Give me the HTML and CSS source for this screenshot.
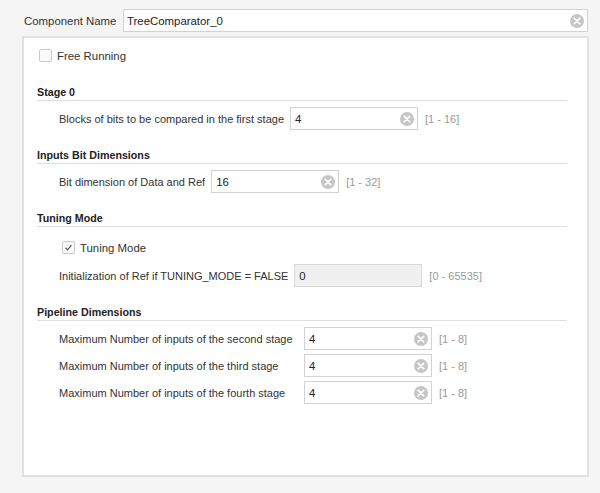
FILE: index.html
```html
<!DOCTYPE html>
<html>
<head>
<meta charset="utf-8">
<link rel="stylesheet" href="styles.css">
</head>
<body>
<div class="name-row">
  <label class="name-label">Component Name</label>
  <div class="field name-field">
    <span class="value">TreeComparator_0</span>
    <svg class="clear" width="14" height="14" viewBox="0 0 14 14"><circle cx="7" cy="7" r="7" fill="#c6c6c6"/><path d="M4.3 4.3 L9.7 9.7 M9.7 4.3 L4.3 9.7" stroke="#fff" stroke-width="1.8" stroke-linecap="round"/></svg>
  </div>
</div>

<div class="panel">
  <div class="check-row top-check">
    <span class="checkbox"></span>
    <span>Free Running</span>
  </div>

  <div class="section">
    <div class="heading">Stage 0</div>
    <div class="row">
      <span class="label">Blocks of bits to be compared in the first stage</span>
      <div class="field"><span class="value">4</span><svg class="clear" width="14" height="14" viewBox="0 0 14 14"><circle cx="7" cy="7" r="7" fill="#c6c6c6"/><path d="M4.3 4.3 L9.7 9.7 M9.7 4.3 L4.3 9.7" stroke="#fff" stroke-width="1.8" stroke-linecap="round"/></svg></div>
      <span class="hint">[1 - 16]</span>
    </div>
  </div>

  <div class="section">
    <div class="heading">Inputs Bit Dimensions</div>
    <div class="row">
      <span class="label">Bit dimension of Data and Ref</span>
      <div class="field"><span class="value">16</span><svg class="clear" width="14" height="14" viewBox="0 0 14 14"><circle cx="7" cy="7" r="7" fill="#c6c6c6"/><path d="M4.3 4.3 L9.7 9.7 M9.7 4.3 L4.3 9.7" stroke="#fff" stroke-width="1.8" stroke-linecap="round"/></svg></div>
      <span class="hint">[1 - 32]</span>
    </div>
  </div>

  <div class="section">
    <div class="heading">Tuning Mode</div>
    <div class="check-row sub-check">
      <span class="checkbox"><svg width="13" height="13" viewBox="0 0 13 13"><path d="M3 6.8 L5.4 9.2 L10 3.6" fill="none" stroke="#5a5a5a" stroke-width="1.4"/></svg></span>
      <span>Tuning Mode</span>
    </div>
    <div class="row row-tight">
      <span class="label">Initialization of Ref if TUNING_MODE = FALSE</span>
      <div class="field disabled"><span class="value">0</span></div>
      <span class="hint">[0 - 65535]</span>
    </div>
  </div>

  <div class="section">
    <div class="heading">Pipeline Dimensions</div>
    <div class="grid">
      <span class="label">Maximum Number of inputs of the second stage</span>
      <div class="field"><span class="value">4</span><svg class="clear" width="14" height="14" viewBox="0 0 14 14"><circle cx="7" cy="7" r="7" fill="#c6c6c6"/><path d="M4.3 4.3 L9.7 9.7 M9.7 4.3 L4.3 9.7" stroke="#fff" stroke-width="1.8" stroke-linecap="round"/></svg></div>
      <span class="hint">[1 - 8]</span>

      <span class="label">Maximum Number of inputs of the third stage</span>
      <div class="field"><span class="value">4</span><svg class="clear" width="14" height="14" viewBox="0 0 14 14"><circle cx="7" cy="7" r="7" fill="#c6c6c6"/><path d="M4.3 4.3 L9.7 9.7 M9.7 4.3 L4.3 9.7" stroke="#fff" stroke-width="1.8" stroke-linecap="round"/></svg></div>
      <span class="hint">[1 - 8]</span>

      <span class="label">Maximum Number of inputs of the fourth stage</span>
      <div class="field"><span class="value">4</span><svg class="clear" width="14" height="14" viewBox="0 0 14 14"><circle cx="7" cy="7" r="7" fill="#c6c6c6"/><path d="M4.3 4.3 L9.7 9.7 M9.7 4.3 L4.3 9.7" stroke="#fff" stroke-width="1.8" stroke-linecap="round"/></svg></div>
      <span class="hint">[1 - 8]</span>
    </div>
  </div>
</div>
</body>
</html>
```

FILE: styles.css
```css
* {
  box-sizing: border-box;
}

html, body {
  margin: 0;
  padding: 0;
}

body {
  background: #f5f5f5;
  font-family: "Liberation Sans", Arial, sans-serif;
  font-size: 11px;
  color: #333;
  padding-top: 9px;
  width: 600px;
  height: 493px;
  overflow: hidden;
}

.name-row {
  display: flex;
  align-items: center;
  padding-left: 24px;
  padding-right: 12px;
  height: 23px;
}

.name-label {
  width: 99px;
  flex: none;
  font-size: 11.4px;
}

.field {
  display: flex;
  align-items: center;
  height: 23px;
  width: 128px;
  flex: none;
  background: #fff;
  border: 1px solid #d2d2d2;
  padding: 0 3px 0 4px;
  font-size: 11.4px;
}

.name-field {
  flex: 1;
  width: auto;
  padding-left: 3px;
}

.field .value {
  flex: 1;
  color: #222;
}

.clear {
  flex: none;
  display: block;
}

.field.disabled {
  background: #f0f0f0;
  border-color: #d8d8d8;
}

.panel {
  margin: 4px 11px 0 22px;
  height: 441px;
  background: #fff;
  border: 2px solid #e1e1e1;
  padding: 6px 20px 0 13px;
}

.check-row {
  display: flex;
  align-items: center;
  gap: 5px;
  height: 23px;
  font-size: 11.4px;
}

.top-check {
  padding-left: 2px;
}

.sub-check {
  padding-left: 25px;
  margin-top: 9px;
}

.checkbox {
  width: 13px;
  height: 13px;
  border: 1px solid #c9c9c9;
  border-radius: 2px;
  background: #fafafa;
  display: flex;
  align-items: center;
  justify-content: center;
  flex: none;
}

.checkbox svg {
  display: block;
}

.section {
  margin-top: 17px;
}

.heading {
  font-weight: bold;
  font-size: 10.7px;
  color: #222;
  line-height: 16px;
  border-bottom: 1px solid #dedede;
}

.label {
  white-space: nowrap;
}

.row {
  display: flex;
  align-items: center;
  gap: 6px;
  margin-top: 6px;
  padding-left: 22px;
  height: 23px;
}

.row-tight {
  margin-top: 5px;
}

.hint {
  color: #999;
  margin-left: 1px;
  white-space: nowrap;
}

.grid {
  display: grid;
  grid-template-columns: 239px 128px auto;
  grid-auto-rows: 23px;
  column-gap: 6px;
  row-gap: 4px;
  align-items: center;
  margin-top: 6px;
  padding-left: 22px;
}
```
